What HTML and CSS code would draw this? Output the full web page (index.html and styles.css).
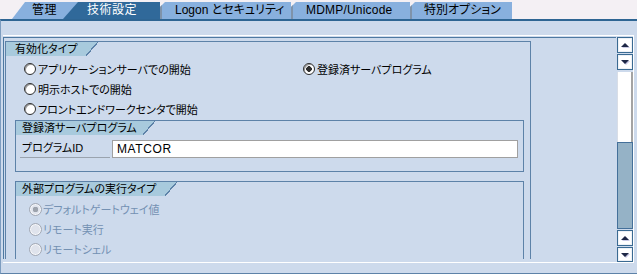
FILE: index.html
```html
<!DOCTYPE html>
<html lang="ja">
<head>
    <meta charset="UTF-8">
    <title>技術設定</title>
    <link rel="stylesheet" href="styles.css">
</head>
<body>
    <div class="tabs">
        <div class="tab tab-first">管理</div>
        <div class="tab tab-active">技術設定</div>
        <div class="tab tab-logon">Logon とセキュリティ</div>
        <div class="tab tab-mdmp">MDMP/Unicode</div>
        <div class="tab tab-extra">特別オプション</div>
    </div>

    <div class="panel">
        <div class="frame">
            <div class="main">
                <div class="group group-outer">
                    <div class="group-title title-outer">有効化タイプ</div>
                    <div class="radio-grid">
                        <div class="radio"><span class="dot"></span>アプリケーションサーバでの開始</div>
                        <div class="radio"><span class="dot on"></span>登録済サーバプログラム</div>
                        <div class="radio"><span class="dot"></span>明示ホストでの開始</div>
                        <div></div>
                        <div class="radio"><span class="dot"></span>フロントエンドワークセンタで開始</div>
                        <div></div>
                    </div>

                    <div class="group group-sub group-server">
                        <div class="group-title title-server">登録済サーバプログラム</div>
                        <div class="field-row">
                            <span class="field-label">プログラムID</span>
                            <span class="field-input">MATCOR</span>
                        </div>
                    </div>

                    <div class="group group-sub group-open">
                        <div class="group-title title-exec">外部プログラムの実行タイプ</div>
                        <div class="radio-list">
                            <div class="radio disabled"><span class="dot on"></span>デフォルトゲートウェイ値</div>
                            <div class="radio disabled"><span class="dot"></span>リモート実行</div>
                            <div class="radio disabled"><span class="dot"></span>リモートシェル</div>
                        </div>
                    </div>
                </div>
            </div>

            <div class="scrollbar">
                <div class="sb-btn up"></div>
                <div class="sb-btn down"></div>
                <div class="sb-track">
                    <div class="sb-thumb"></div>
                </div>
                <div class="sb-btn up"></div>
                <div class="sb-btn down small"></div>
            </div>
        </div>
    </div>
</body>
</html>
```

FILE: styles.css
```css
body {
    margin: 0;
    width: 637px;
    height: 274px;
    overflow: hidden;
    background-color: #f4f0f4;
    font-family: "Liberation Sans", "Noto Sans CJK JP", sans-serif;
    font-size: 11px;
    font-feature-settings: "palt";
    color: #000;
}

/* tab strip */
.tabs {
    display: flex;
    align-items: flex-end;
    height: 19px;
    font-size: 12px;
}
.tab {
    position: relative;
    box-sizing: border-box;
    height: 17px;
    line-height: 17px;
    padding-left: 14px;
    background-color: #88b0de;
    white-space: nowrap;
    clip-path: polygon(0 5px, 5px 0, 100% 0, 100% 100%, 0 100%);
    box-shadow: inset 2px 0 0 #7f93aa;
}
.tab-first {
    margin-left: 12px;
    width: 66px;
    padding-left: 20px;
    letter-spacing: 0.5px;
    clip-path: polygon(0 100%, 13px 0, 100% 0, 100% 100%);
    box-shadow: none;
}
.tab-active {
    margin-left: -15px;
    width: 97px;
    padding-left: 24px;
    letter-spacing: 0.5px;
    background-color: #30699a;
    color: #fff;
    clip-path: polygon(0 100%, 15px 0, 100% 0, 100% 100%);
    box-shadow: none;
}
.tab-logon { width: 131px; padding-left: 15px; }
.tab-mdmp { width: 119px; padding-left: 15px; letter-spacing: 0.2px; }
.tab-extra { width: 102px; }

/* main panel */
.panel {
    box-sizing: border-box;
    height: 255px;
    background-color: #cddaec;
    border-top: 2px solid #2e6593;
    border-left: 1px solid #7d9dc0;
    border-bottom: 1px solid #5d82a8;
    padding-top: 14px;
}
.frame {
    display: flex;
    gap: 1px;
    width: 631px;
    box-sizing: border-box;
    margin-left: 2px;
    padding-top: 1px;
    border-top: 1px solid #fff;
    border-right: 1px solid #fff;
    border-bottom: 1px solid #fff;
}
.main {
    box-sizing: border-box;
    width: 613px;
    height: 222px;
    margin-bottom: 3px;
    overflow: hidden;
    border-top: 1px solid #4e79a1;
    border-left: 1px solid #4e79a1;
    padding: 3px 0 0 1px;
}

/* group boxes */
.group {
    box-sizing: border-box;
    border: 1px solid #5d82a8;
}
.group-outer {
    width: 526px;
    height: 260px;
    border-bottom: none;
}
.group-sub {
    margin: 1px 6px 0 9px;
}
.group-server {
    height: 52px;
}
.group-open {
    margin-top: 9px;
    height: 120px;
    border-bottom: none;
}
.group-title {
    box-sizing: border-box;
    height: 14px;
    line-height: 14px;
    padding-left: 6px;
    white-space: nowrap;
    background:
        linear-gradient(to bottom right, #a8cadd calc(50% - 0.8px), #5d82a8 calc(50% - 0.8px), #5d82a8 calc(50% + 0.5px), transparent calc(50% + 0.5px)) right / 12px 100% no-repeat,
        linear-gradient(#a8cadd, #a8cadd) left / calc(100% - 12px) 100% no-repeat;
}
.title-outer { width: 92px; padding-left: 9px; }
.title-server { width: 139px; }
.title-exec { width: 161px; }

/* radios */
.radio-grid {
    display: grid;
    grid-template-columns: 279px 1fr;
    grid-auto-rows: 20px;
    margin-top: 3px;
    padding-left: 18px;
}
.radio-list {
    display: grid;
    grid-auto-rows: 20px;
    margin-top: 3px;
    padding-left: 13px;
}
.radio {
    display: flex;
    align-items: center;
    white-space: nowrap;
}
.dot {
    box-sizing: border-box;
    width: 12px;
    height: 12px;
    margin-right: 2px;
    border-radius: 50%;
    border: 1px solid #2e2e2e;
    background-color: #fff;
    box-shadow: inset 1px 1px 0 #9a9a9a;
}
.dot.on {
    background: radial-gradient(circle, #2e2e2e 0 2.6px, #fff 3px);
}
.radio.disabled {
    color: #7491b3;
}
.radio.disabled .dot {
    width: 13px;
    height: 13px;
    margin-right: 1px;
    border-color: #a2a8b4;
    background-color: #dfe3ec;
    box-shadow: inset 0 0 0 1px #f6f7fa;
}
.radio.disabled .dot.on {
    background: radial-gradient(circle, #9da3ad 0 2.6px, #dfe3ec 3px);
}

/* input row */
.field-row {
    display: flex;
    margin-top: 5px;
    padding-left: 4px;
}
.field-label {
    box-sizing: border-box;
    width: 90px;
    height: 18px;
    line-height: 17px;
    padding-left: 2px;
    border-bottom: 1px solid #9aa3ae;
}
.field-input {
    box-sizing: border-box;
    width: 406px;
    height: 18px;
    line-height: 16px;
    margin-left: 2px;
    padding-left: 4px;
    font-size: 12px;
    background-color: #fff;
    border: 1px solid #a0a0a0;
    letter-spacing: 0.6px;
}

/* scrollbar */
.scrollbar {
    display: flex;
    flex-direction: column;
    gap: 1px;
    width: 16px;
}
.sb-btn {
    position: relative;
    box-sizing: border-box;
    height: 16px;
    border: 1px solid #3a6a92;
    background-color: #fff;
    box-shadow: inset 0 0 0 1px #eef1f6;
}
.sb-btn.small {
    height: 15px;
}
.sb-btn::after {
    content: "";
    position: absolute;
    left: 3px;
    top: 5px;
    border-left: 4px solid transparent;
    border-right: 4px solid transparent;
    filter: drop-shadow(1px 1px 0 #c9c9e4);
}
.sb-btn.up::after {
    border-bottom: 4px solid #1e2746;
}
.sb-btn.down::after {
    border-top: 4px solid #1e2746;
}
.sb-track {
    display: flex;
    flex-direction: column;
    height: 157px;
    margin-top: 1px;
}
.sb-track::before {
    content: "";
    box-sizing: border-box;
    height: 70px;
    background-color: #fff;
    border-left: 1px solid #d8dde6;
    border-right: 2px solid #a3a3a3;
}
.sb-thumb {
    flex: 1;
    box-sizing: border-box;
    background-color: #95b2c6;
    border: 1px solid #44709a;
}
```
